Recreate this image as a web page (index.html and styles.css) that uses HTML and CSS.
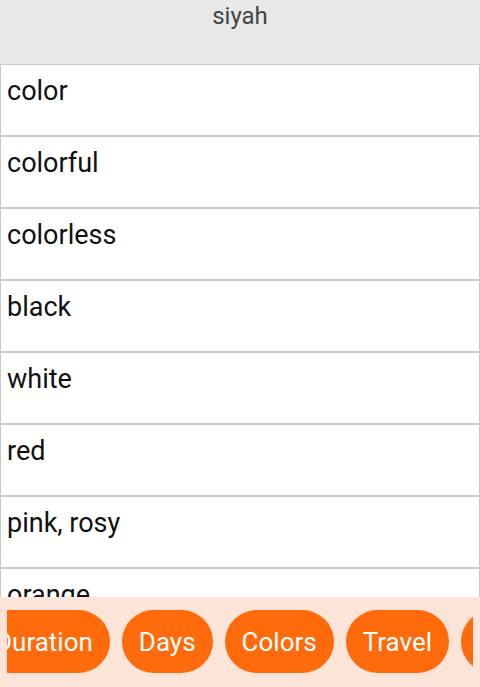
FILE: index.html
```html
<!DOCTYPE html>
<html>
<head>
<meta charset="utf-8">
<link rel="stylesheet" href="styles.css">
</head>
<body>
<div class="app">
  <header class="top">siyah</header>
  <main class="list">
    <div class="row">color</div>
    <div class="row">colorful</div>
    <div class="row">colorless</div>
    <div class="row">black</div>
    <div class="row">white</div>
    <div class="row">red</div>
    <div class="row">pink, rosy</div>
    <div class="row">orange</div>
    <div class="row">yellow</div>
  </main>
  <nav class="bar">
    <div class="track">
      <span class="chip first">Duration</span>
      <span class="chip">Days</span>
      <span class="chip">Colors</span>
      <span class="chip">Travel</span>
      <span class="chip">Family</span>
    </div>
  </nav>
</div>
</body>
</html>
```
FILE: styles.css
```css
html, body {
  margin: 0;
  padding: 0;
}
body {
  font-family: Roboto, "Liberation Sans", sans-serif;
  background: #ffffff;
}
.app {
  width: 480px;
  height: 687px;
  display: flex;
  flex-direction: column;
  overflow: hidden;
}
.top {
  height: 64px;
  flex: none;
  background: #e9e9e9;
  color: #444444;
  font-size: 24px;
  text-align: center;
  line-height: 28px;
  padding-top: 2px;
  box-sizing: border-box;
}
.list {
  flex: 1;
  overflow: hidden;
  min-height: 0;
}
.row {
  height: 72px;
  box-sizing: border-box;
  border: 1px solid #c9c9c9;
  padding: 10px 6px 0;
  font-size: 27px;
  color: #111111;
  line-height: 32px;
}
.bar {
  flex: none;
  height: 90px;
  background: #fce4d9;
  box-sizing: border-box;
  padding: 13px 7px 0;
}
.track {
  overflow: hidden;
  display: flex;
  gap: 12px;
  white-space: nowrap;
}
.chip {
  flex: none;
  height: 63px;
  box-sizing: border-box;
  border-radius: 32px;
  background: #ff6b0a;
  color: #ffffff;
  font-size: 26px;
  line-height: 64px;
  padding: 0 17px;
}
.chip.first {
  margin-left: -29px;
}
```
